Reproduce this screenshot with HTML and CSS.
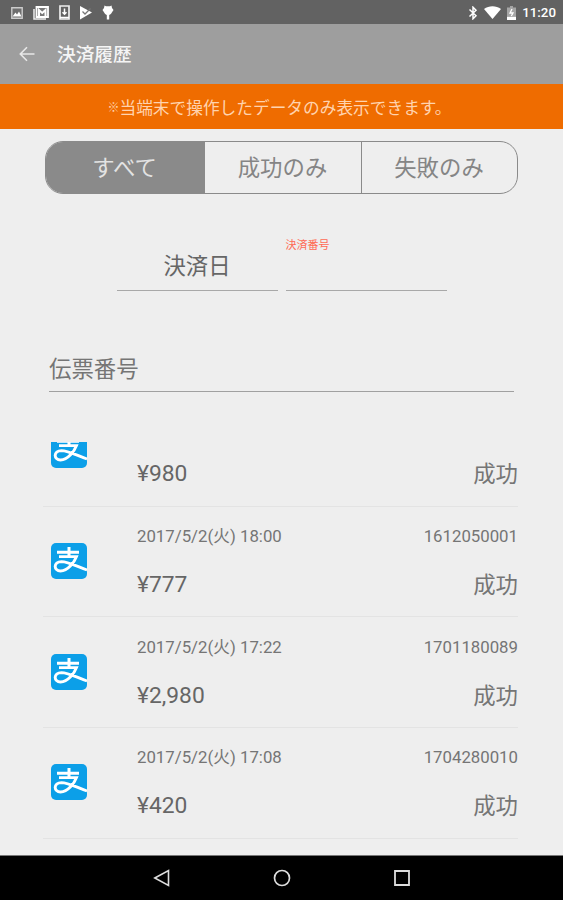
FILE: index.html
```html
<!DOCTYPE html>
<html lang="ja">
<head>
    <meta charset="UTF-8">
    <meta name="viewport" content="width=device-width, initial-scale=1.0">
    <title>決済履歴</title>
    <link rel="stylesheet" href="styles.css">
</head>
<body>
    <div class="status-bar">
        <div class="status-left">
            <svg width="12" height="12" viewBox="0 0 12 12"><path d="M.8 .8H11.2V11.2H.8Z" fill="#6e6e6e" stroke="#ccc" stroke-width="1.4"/><path d="M1.5 9.5L4.5 5.5L6 7.5L8 4.5L10.5 9.5Z" fill="#fff"/></svg>
            <svg width="16" height="14" viewBox="0 0 16 14"><path d="M1 3V13H13" fill="none" stroke="#eee" stroke-width="1.5"/><path d="M3.5 1H15V11H3.5Z" fill="#777" stroke="#fff" stroke-width="1.8"/><path d="M6 10V4L9.2 7L12.5 4V10" fill="none" stroke="#fff" stroke-width="2"/></svg>
            <svg width="11" height="15" viewBox="0 0 11 15"><path d="M1 1H10V14H1Z" fill="none" stroke="#eee" stroke-width="1.7"/><path d="M5.5 3.5V9M3.5 7.3L5.5 9.3L7.5 7.3M1 12.5H10" fill="none" stroke="#fff" stroke-width="1.5"/></svg>
            <svg width="12" height="14" viewBox="0 0 12 14"><path d="M0 0L12 6.5L0 13.5Z" fill="#fff"/><path d="M2.5 5.5L5 8L10.5 2.5" fill="none" stroke="#777" stroke-width="1.3"/></svg>
            <svg width="12" height="15" viewBox="0 0 12 15"><path d="M2.5 .5L4 1.3H8L9.5 .5L10 3L11.5 5L10 7.2C9.2 8.7 8.5 9.5 7.2 10V14.5H4.8V10C3.5 9.5 2.8 8.7 2 7.2L.5 5L2 3Z" fill="#fff"/></svg>
        </div>
        <div class="status-right">
            <svg width="10" height="14" viewBox="0 0 10 14"><path d="M1.5 3.5L8 9.8L5 12.8V1.2L8 4.2L1.5 10.5" fill="none" stroke="#fff" stroke-width="1.5"/></svg>
            <svg width="17" height="13" viewBox="0 0 17 13"><path d="M0 3C5 -.8 12 -.8 17 3L8.5 13Z" fill="#fff"/></svg>
            <svg width="9" height="14" viewBox="0 0 9 14"><path d="M3 0H6V1.5H9V10H0V1.5H3Z" fill="#a5a5a5"/><path d="M0 10.5H9V14H0Z" fill="#fff"/><path d="M5 3L3 7H6L4.3 10" fill="none" stroke="#fff" stroke-width="1.3"/></svg>
            <span class="clock">11:20</span>
        </div>
    </div>

    <header class="app-bar">
        <svg width="16" height="16" viewBox="0 0 16 16"><path d="M15.5 8H1.5M8 1.3L1.3 8L8 14.7" fill="none" stroke="#e8e8e8" stroke-width="1.6"/></svg>
        <h1>決済履歴</h1>
    </header>

    <div class="notice"><span class="mark">※</span>当端末で操作したデータのみ表示できます。</div>

    <main>
        <div class="tabs">
            <button class="tab active">すべて</button>
            <button class="tab">成功のみ</button>
            <button class="tab">失敗のみ</button>
        </div>

        <div class="filters">
            <div class="field date">決済日</div>
            <div class="field number"><label>決済番号</label></div>
        </div>
        <div class="field slip">伝票番号</div>

        <div class="list" id="list"></div>
    </main>

    <nav class="nav-bar">
        <svg width="18" height="18" viewBox="0 0 18 18"><path d="M1.8 9L15.5 1.5V16.5Z" fill="none" stroke="#ddd" stroke-width="1.6"/></svg>
        <svg width="18" height="18" viewBox="0 0 18 18"><circle cx="9" cy="9" r="7.5" fill="none" stroke="#ddd" stroke-width="1.7"/></svg>
        <svg width="18" height="18" viewBox="0 0 18 18"><path d="M2 2H16V16H2Z" fill="none" stroke="#ddd" stroke-width="1.8"/></svg>
    </nav>

    <template id="logo">
        <svg class="logo" width="36" height="36" viewBox="0 0 36 36">
            <rect width="36" height="36" rx="5" fill="#0c9fe8"/>
            <path d="M6 9.2H28M18 4V14" fill="none" stroke="#fff" stroke-width="3"/>
            <path d="M8 13.6H25.5C23.5 19 17 28 9.5 28C2.5 28 2 18.8 10.5 18.6C17 18.6 26 23.5 36 27" fill="none" stroke="#fff" stroke-width="2.9"/>
        </svg>
    </template>

    <script>
        const payments = [
            { date: "", number: "", amount: "¥980", result: "成功" },
            { date: "2017/5/2(火) 18:00", number: "1612050001", amount: "¥777", result: "成功" },
            { date: "2017/5/2(火) 17:22", number: "1701180089", amount: "¥2,980", result: "成功" },
            { date: "2017/5/2(火) 17:08", number: "1704280010", amount: "¥420", result: "成功" }
        ];

        const list = document.getElementById("list");
        const logo = document.getElementById("logo");

        for (let p of payments) {
            let row = document.createElement("div");
            row.className = "row";
            row.appendChild(logo.content.cloneNode(true));
            let info = document.createElement("div");
            info.className = "info";
            for (let key of ["date", "number", "amount", "result"]) {
                let span = document.createElement("span");
                span.className = key;
                span.textContent = p[key];
                info.appendChild(span);
            }
            row.appendChild(info);
            list.appendChild(row);
        }
    </script>
</body>
</html>
```
FILE: styles.css
```css
* {
    box-sizing: border-box;
}
body {
    margin: 0;
    height: 900px;
    display: flex;
    flex-direction: column;
    overflow: hidden;
    background-color: #eee;
    color: #666;
    font-family: Roboto, "Noto Sans CJK JP", sans-serif;
}
svg {
    display: block;
    flex: none;
}
.status-bar {
    height: 24px;
    flex: none;
    display: flex;
    justify-content: space-between;
    align-items: center;
    padding: 1px 7px 0 11px;
    background-color: #626262;
    color: #fff;
}
.status-left {
    display: flex;
    align-items: center;
    gap: 10px;
}
.status-right {
    display: flex;
    align-items: center;
    gap: 6px;
}
.clock {
    font-size: 13.3px;
    font-weight: 500;
    line-height: 20px;
}
.app-bar {
    height: 60px;
    flex: none;
    display: flex;
    align-items: center;
    gap: 22px;
    padding-left: 19px;
    background-color: #9e9e9e;
}
.app-bar h1 {
    margin: 0;
    padding-top: 1px;
    font-size: 18.7px;
    font-weight: 500;
    line-height: 28px;
    color: #f5f5f5;
}
.notice {
    height: 45px;
    flex: none;
    display: flex;
    align-items: center;
    justify-content: center;
    padding-right: 4px;
    background-color: #ef6c00;
    color: #ffd3ae;
    font-size: 16.7px;
}
.notice .mark {
    font-size: 12px;
    font-weight: 700;
}
main {
    flex: 1;
    min-height: 0;
    display: flex;
    flex-direction: column;
    padding: 12px 45px 0;
}
.tabs {
    height: 53px;
    flex: none;
    display: grid;
    grid-template-columns: 159px 157px 1fr;
    border: 1.5px solid #8a8a8a;
    border-radius: 18px;
    overflow: hidden;
}
.tab {
    border: 0;
    border-right: 1.5px solid #8a8a8a;
    padding: 0 1px 4px 0;
    background: none;
    color: #858585;
    font-family: inherit;
    font-size: 22.4px;
}
.tab:last-child {
    border-right: 0;
}
.tab.active {
    background-color: #8a8a8a;
    color: #e3e3e3;
}
.filters {
    display: flex;
    gap: 8px;
    margin: 41px 0 0 71.5px;
}
.field {
    border-bottom: 1.5px solid #a8a8a8;
    font-size: 22.4px;
}
.date,
.number {
    width: 161px;
    height: 56px;
}
.date {
    padding-top: 14px;
    text-align: center;
    line-height: 34px;
}
.number label {
    display: block;
    padding-top: 3px;
    font-size: 11px;
    line-height: 16px;
    color: #ff6a55;
}
.slip {
    height: 42px;
    margin: 59px 4px 0;
    line-height: 38px;
    color: #757575;
    border-color: #a0a0a0;
}
.list {
    flex: 1;
    min-height: 0;
    margin: 50px 0 0 -2px;
    overflow: hidden;
}
.row {
    height: 110.7px;
    display: flex;
    align-items: flex-start;
    gap: 50px;
    padding: 36.3px 0 0 8px;
    border-bottom: 1px solid #e3e3e3;
}
.row:first-child {
    margin-top: -46px;
}
.info {
    flex: 1;
    display: grid;
    grid-template-columns: 1fr auto;
    grid-template-rows: 24px 34px;
    row-gap: 20px;
    margin-top: -19px;
    line-height: 24px;
}
.row .info .date,
.row .info .number {
    width: auto;
    height: auto;
    padding: 0;
    font-size: 16.8px;
    line-height: 24px;
    text-align: left;
    color: #757575;
}
.amount,
.result {
    font-size: 22.4px;
    line-height: 34px;
}
.amount {
    font-size: 22.8px;
}
.result {
    text-align: right;
    color: #757575;
}
.nav-bar {
    height: 45px;
    flex: none;
    display: flex;
    justify-content: center;
    align-items: center;
    gap: 102px;
    background-color: #000;
    border-top: 1px solid #777;
}
```
